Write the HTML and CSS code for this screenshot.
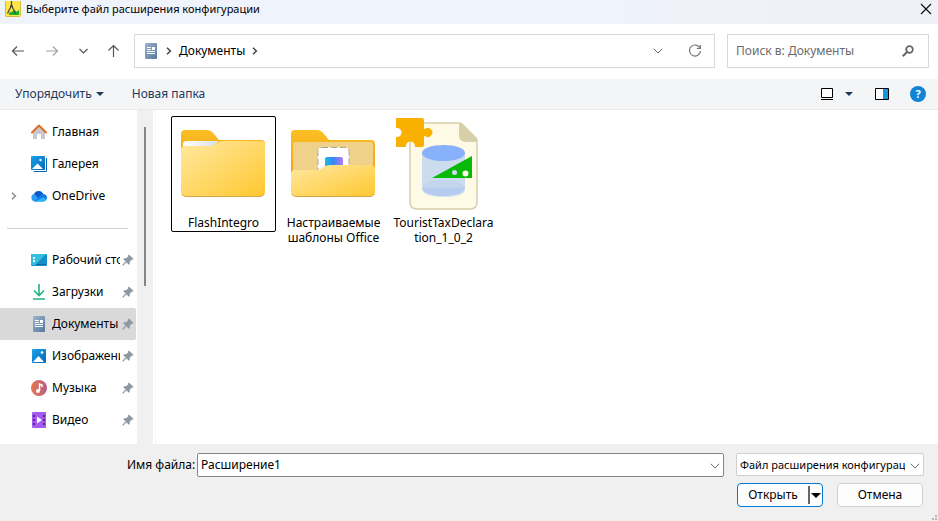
FILE: index.html
```html
<!DOCTYPE html>
<html lang="ru">
<head>
<meta charset="utf-8">
<title>Выберите файл расширения конфигурации</title>
<link rel="stylesheet" href="styles.css">
</head>
<body>
<svg class="defs" aria-hidden="true">
  <defs>
    <linearGradient id="g-blue" x1="0" y1="0" x2="1" y2="1"><stop offset="0" stop-color="#1aa3ea"/><stop offset="1" stop-color="#0566b8"/></linearGradient>
    <linearGradient id="g-doc" x1="0" y1="0" x2="1" y2="1"><stop offset="0" stop-color="#9db4cc"/><stop offset="1" stop-color="#56789e"/></linearGradient>
    <linearGradient id="g-folder" x1="0" y1="0" x2="1" y2="1"><stop offset="0" stop-color="#ffe8a0"/><stop offset="1" stop-color="#ffc830"/></linearGradient>
    <linearGradient id="g-back" x1="0" y1="0" x2="0" y2="1"><stop offset="0" stop-color="#fbbf24"/><stop offset="1" stop-color="#efa30e"/></linearGradient>
    <symbol id="pin" viewBox="0 0 12 12"><path fill="#8d98a2" d="M7 .5 11.500 5l-1 .8-.8-.1-2 2 .1 2-1 1-2.400-2.400L1.400 11.400.6 11.500.5 10.600 3.600 7.500 1.200 5.200l1-1 2 .1 2-2-.1-.9z"/></symbol>
    <symbol id="chevron-down" viewBox="0 0 10 6"><path fill="none" stroke="currentColor" d="M.8.8 5 5 9.200.8"/></symbol>
    <symbol id="chevron-right" viewBox="0 0 6 8"><path fill="none" stroke="currentColor" stroke-width="1.500" d="m1 .8 3.400 3.200L1 7.200"/></symbol>
    <symbol id="triangle" viewBox="0 0 8 4"><path fill="currentColor" d="M0 0h8L4 4z"/></symbol>
    <symbol id="document" viewBox="0 0 16 16"><rect x="2" width="12" height="16" rx="1" fill="url(#g-doc)"/><path stroke="#fff" d="M4 4.500h4M4 6.500h4M4 8.500h8M4 10.500h8"/><path fill="#fff" d="M9 4h3v3H9z"/></symbol>
  </defs>
</svg>

<header class="titlebar">
  <svg class="app-icon" viewBox="0 0 16 16"><rect x=".5" y="-2" width="15" height="17.500" rx="1" fill="#ffe54a" stroke="#d9b83a"/><path fill="#0db32a" d="M4 14v-2l6-3 1 2 3-2v5z"/><path fill="none" stroke="#4a4a2c" stroke-width="1.300" d="m2.500 12.500 4-8 4 8M6.500 0v4M5 5h3"/></svg>
  <h1>Выберите файл расширения конфигурации</h1>
  <button class="close" aria-label="Закрыть"><svg viewBox="0 0 12 12"><path stroke="#111" stroke-width="1.200" d="m1 1 10 10M11 1 1 11"/></svg></button>
</header>

<nav class="navigation" aria-label="Навигация">
  <div class="history">
    <button aria-label="Назад"><svg viewBox="0 0 16 16"><path d="M14 8H2.500M7 3.500 2.500 8 7 12.500"/></svg></button>
    <button class="disabled" aria-label="Вперёд"><svg viewBox="0 0 16 16"><path d="M2 8h11.500M9 3.500l4.500 4.500L9 12.500"/></svg></button>
    <button class="recent" aria-label="Последние расположения"><svg viewBox="0 0 16 16"><path d="m4.500 6 4 4 4-4"/></svg></button>
    <button aria-label="Вверх"><svg viewBox="0 0 16 16"><path d="M7.500 14V2.500M2.500 7.500l5-5 5 5"/></svg></button>
  </div>
  <div class="address">
    <svg class="icon16"><use href="#document"/></svg>
    <svg class="crumb-arrow"><use href="#chevron-right"/></svg>
    <a href="#documents">Документы</a>
    <svg class="crumb-arrow"><use href="#chevron-right"/></svg>
    <button class="expand" aria-label="Показать адреса"><svg class="chevron"><use href="#chevron-down"/></svg></button>
    <button aria-label="Обновить"><svg class="refresh" viewBox="0 0 14 14"><path fill="none" stroke="#777" stroke-width="1.200" d="M12 4.200A5.500 5.500 0 1 0 12.500 7M12.300 1v3.500H8.800"/></svg></button>
  </div>
  <div class="search">
    <input type="text" aria-label="Поиск" placeholder="Поиск в: Документы">
    <svg viewBox="0 0 12 12"><circle cx="7.500" cy="4.500" r="3.300" fill="none" stroke="#666" stroke-width="1.800"/><path stroke="#666" stroke-width="2" d="M5.200 6.800.8 11.200"/></svg>
  </div>
</nav>

<div class="toolbar">
  <button>Упорядочить <svg class="triangle"><use href="#triangle"/></svg></button>
  <button>Новая папка</button>
  <div class="view-tools">
    <button aria-label="Вид"><svg class="view" viewBox="0 0 12 12"><path fill="#fff" stroke="#000" d="M.5.5h11v9H.5zM0 11.500h12"/></svg></button>
    <button class="view-menu" aria-label="Изменить вид"><svg class="triangle"><use href="#triangle"/></svg></button>
    <button class="preview" aria-label="Область просмотра"><svg viewBox="0 0 14 12"><path fill="#fff" d="M0 0h14v12H0z"/><path fill="#1594e0" d="M8 1h5v10H8z"/><path fill="none" stroke="#000" d="M.5.5h13v11H.5z"/></svg></button>
    <button class="help" aria-label="Справка">?</button>
  </div>
</div>

<main>
  <aside>
    <ul>
      <li><a href="#home"><span class="tree"></span><svg class="icon16" viewBox="0 0 16 16"><path fill="#c9c9cb" d="M2 7.500 8 2l6 5.500V15h-4v-5H6v5H2z"/><path fill="none" stroke="#df6c25" stroke-width="2" stroke-linecap="round" stroke-linejoin="round" d="m1 8.500 7-7 7 7"/></svg><span class="name">Главная</span></a></li>
      <li><a href="#gallery"><span class="tree"></span><svg class="icon16" viewBox="0 0 16 16"><path fill="none" stroke="#0868b5" d="M2.500 15.500h13V2"/><rect width="14" height="14" rx="1" fill="url(#g-blue)"/><path fill="#fff" d="m1 13 5.500-5.500L12 13z"/><circle cx="9.500" cy="4" r="1.200" fill="#fff"/></svg><span class="name">Галерея</span></a></li>
      <li><a href="#onedrive"><span class="tree"><svg class="tree-arrow"><use href="#chevron-right"/></svg></span><svg class="icon16" viewBox="0 0 16 16"><path fill="#2b9df2" d="M4 13.500A4 4 0 0 1 3.200 5.700 5 5 0 0 1 12 5.500L8 11z"/><path fill="#0a57cf" d="M3.200 5.600A5 5 0 0 1 12.200 6L7.500 10.500z"/><path fill="#0f7bea" d="M3.500 13.400 9.500 7A3.800 3.800 0 1 1 12.200 13.500H4z"/><path fill="#2bb5fa" d="M4 13.500 12 9.500l3.600 1.800a3.800 3.800 0 0 1-3.400 2.200z"/></svg><span class="name">OneDrive</span></a></li>
    </ul>
    <hr>
    <ul>
      <li><a href="#desktop"><span class="tree"></span><svg class="icon16" viewBox="0 0 16 16"><rect y="2" width="16" height="12" rx="1" fill="#168fc8"/><path fill="#35bfe0" d="M1 2h14L4 13H0V3z"/><path fill="#fff" d="M2 5h2v2H2zM2 8h2v2H2z"/><path stroke="#126ba4" d="M5 12.500h10"/></svg><span class="name">Рабочий стол</span><svg class="pin"><use href="#pin"/></svg></a></li>
      <li><a href="#downloads"><span class="tree"></span><svg class="icon16" viewBox="0 0 16 16"><path fill="none" stroke="#20b485" stroke-width="1.600" d="M8 0v11M3 6.500l5 5 5-5M2 15h12"/></svg><span class="name">Загрузки</span><svg class="pin"><use href="#pin"/></svg></a></li>
      <li><a class="selected" href="#documents"><span class="tree"></span><svg class="icon16"><use href="#document"/></svg><span class="name">Документы</span><svg class="pin"><use href="#pin"/></svg></a></li>
      <li><a href="#pictures"><span class="tree"></span><svg class="icon16" viewBox="0 0 16 16"><rect x="1" y="1" width="14" height="14" rx="1" fill="url(#g-blue)"/><path fill="#fff" d="m2 14 5.500-6L13 14z"/><circle cx="11" cy="4.500" r="1.300" fill="#fff"/></svg><span class="name">Изображения</span><svg class="pin"><use href="#pin"/></svg></a></li>
      <li><a href="#music"><span class="tree"></span><svg class="icon16" viewBox="0 0 16 16"><linearGradient id="g-music"><stop stop-color="#e97752"/><stop offset="1" stop-color="#b75b86"/></linearGradient><circle cx="8" cy="8" r="8" fill="url(#g-music)"/><circle cx="7" cy="11" r="2" fill="#fff"/><path fill="none" stroke="#fff" stroke-width="1.500" d="M8.500 11V4l2.500 1v2"/></svg><span class="name">Музыка</span><svg class="pin"><use href="#pin"/></svg></a></li>
      <li><a href="#videos"><span class="tree"></span><svg class="icon16" viewBox="0 0 16 16"><rect x="1" width="14" height="16" rx="1" fill="#a45cf0"/><path fill="#582491" d="M2 3h2v2H2zM2 7h2v2H2zM2 11h2v2H2zM12 3h2v2h-2zM12 7h2v2h-2zM12 11h2v2h-2z"/><path fill="#fff" d="m6 4.500 5 3.500-5 3.500z"/></svg><span class="name">Видео</span><svg class="pin"><use href="#pin"/></svg></a></li>
    </ul>
  </aside>
  <div class="scrollbar"><div class="thumb"></div></div>
  <section class="files" aria-label="Файлы">
    <button class="file focused">
      <svg viewBox="1 1 96 96"><path fill="url(#g-back)" d="M6 18q0-4 4-4h22q4 0 7 4l5 6h42q4 0 4 4v20H6z"/><linearGradient id="g-paper"><stop stop-color="#fff"/><stop offset="1" stop-color="#d9dde3"/></linearGradient><path fill="url(#g-paper)" d="M8 28q0-3 3-3h33l-6 5H8z"/><path fill="url(#g-folder)" d="M6 34q0-4 4-4h26q3 0 6-3 3-2 6-2h38q4 0 4 4v47q0 4-4 4H10q-4 0-4-4z"/><path fill="none" stroke="#d5a545" d="M7 78q1 2.500 4 2.500h74q3 0 4-2.500"/></svg>
      <span>FlashIntegro</span>
    </button>
    <button class="file">
      <svg viewBox="1 1 96 96"><path fill="url(#g-back)" d="M6 18q0-4 4-4h22q4 0 7 4l5 6h42q4 0 4 4v35H6z"/><path fill="#f0d189" d="M8 28q0-2 2-2h76q2 0 2 2v36H8z"/><rect x="33" y="31.500" width="31" height="32" rx="4" fill="#fff" stroke="#a9a49a" stroke-dasharray="6 3"/><linearGradient id="g-office"><stop stop-color="#20b8ec"/><stop offset=".45" stop-color="#3388f7"/><stop offset="1" stop-color="#b77af5"/></linearGradient><path fill="url(#g-office)" d="M40 43q0-2 2-2h14q2 0 2 2v8H40z"/><path fill="url(#g-folder)" d="M6 58q0-4 4-4h22q3 0 5-2 4-3 8-3h41q4 0 4 4v23q0 4-4 4H10q-4 0-4-4z"/><path fill="none" stroke="#d5a545" d="M7 78q1 2.500 4 2.500h74q3 0 4-2.500"/></svg>
      <span>Настраиваемые шаблоны Office</span>
    </button>
    <button class="file">
      <svg viewBox="5 0 96 96"><path fill="#fffae5" stroke="#d6cfaa" stroke-width="1.500" d="M20 6h49l17 17v62q0 7-7 7H26q-7 0-7-7V13z"/><path fill="#d6cfaa" d="M68 6h3l15 15v4H75q-7 0-7-7z"/><path fill="#d7e3ed" d="M31 36h43v36q0 8-21 8t-22-8z"/><ellipse cx="52.500" cy="71" rx="21.500" ry="8" fill="#b5ccef"/><path fill="#c9d9ed" opacity=".7" d="M31 36h43v35H31z"/><ellipse cx="52.500" cy="36" rx="21.500" ry="8" fill="#87b1fb"/><path fill="#08b908" d="m41 61 40-22v22z"/><circle cx="63.500" cy="55.500" r="2.500" fill="#c9ddec"/><circle cx="74.500" cy="56.500" r="3" fill="#fff8e8"/><path fill="#fab000" d="M6 1h25q2 0 2 2v9h1a4.500 4.500 0 1 1 0 7h-1v9q0 2-2 2h-7v-1a4.500 4.500 0 1 0-9 0v1H6q-2 0-2-2v-8h2a4.500 4.500 0 1 0 0-9H4V3q0-2 2-2z"/></svg>
      <span>TouristTaxDeclara<wbr>tion_1_0_2</span>
    </button>
  </section>
</main>

<footer>
  <label for="filename">Имя файла:</label>
  <div class="field name-field"><input id="filename" type="text" value="Расширение1"><svg class="chevron"><use href="#chevron-down"/></svg></div>
  <div class="choices">
    <div class="field type-field"><select aria-label="Тип файлов"><option>Файл расширения конфигурации</option></select><svg class="chevron"><use href="#chevron-down"/></svg></div>
    <div class="actions">
      <div class="split"><button>Открыть</button><button class="split-arrow" aria-label="Варианты открытия"><svg class="triangle"><use href="#triangle"/></svg></button></div>
      <button class="cancel">Отмена</button>
    </div>
  </div>
  <svg class="grip" viewBox="0 0 6 6"><path fill="#b8b8b8" d="M3 0h2v2H3zM0 3h2v2H0zM3 3h2v2H3z"/></svg>
</footer>
</body>
</html>
```
FILE: styles.css
```css
* { box-sizing: border-box; }

body {
  margin: 0;
  height: 100vh;
  display: flex;
  flex-direction: column;
  overflow: hidden;
  background: #fff;
  color: #000;
  font: 12px/16px "Noto Sans", "Open Sans", sans-serif;
}

button, input, select { font: inherit; color: inherit; }
button { border: 0; padding: 0; background: none; }
a { color: inherit; text-decoration: none; }
svg { display: block; flex: none; }
.defs { position: absolute; width: 0; height: 0; }
.icon16 { width: 16px; height: 16px; }
.chevron { width: 10px; height: 6px; color: #666; }
.triangle { width: 8px; height: 4px; }

.titlebar {
  display: flex;
  flex: none;
  height: 24px;
  padding: 0 6px 6px 5px;
  gap: 5px;
  align-items: center;
  background: linear-gradient(90deg, #eff3fb 65%, #eff1f6 85%);
}
.titlebar h1 { margin: 0; font-size: 11px; font-weight: 400; }
.app-icon { width: 16px; height: 16px; }
.close { margin-left: auto; }
.close svg { width: 12px; height: 12px; }

.navigation {
  display: flex;
  flex: none;
  height: 55px;
  padding: 10px 9px 11px 10px;
  gap: 12px;
}
.history { display: flex; width: 112px; gap: 18px; align-items: center; }
.history svg { width: 16px; height: 16px; fill: none; stroke: #555; stroke-width: 1.2; }
.history .disabled svg { stroke: #a5a5a5; }
.history .recent { margin: 0 -3px; }
.address {
  display: flex;
  flex: 1;
  min-width: 0;
  padding: 0 12px 0 8px;
  gap: 7px;
  align-items: center;
  border: 1px solid #d9d9d9;
}
.crumb-arrow { width: 6px; height: 8px; color: #444; }
.address .expand { margin: 0 18px 0 auto; }
.refresh { width: 14px; height: 14px; }
.search {
  display: flex;
  width: 202px;
  padding: 0 14px 0 8px;
  align-items: center;
  border: 1px solid #d9d9d9;
}
.search input { flex: 1; min-width: 0; border: 0; padding: 0; outline: 0; background: none; }
.search input::placeholder { color: #6b6b6b; opacity: 1; }
.search svg { width: 12px; height: 12px; }

.toolbar {
  display: flex;
  flex: none;
  height: 31px;
  padding: 0 12px 0 15px;
  gap: 28px;
  align-items: center;
  border-bottom: 1px solid #e8e9ea;
  background: #f4f5f7;
  color: #1e395b;
}
.toolbar button { display: flex; gap: 4px; align-items: center; }
.view-tools { display: flex; margin-left: auto; align-items: center; }
.view { width: 12px; height: 12px; }
.view-menu { margin: 0 22px 0 12px; }
.preview svg { width: 14px; height: 12px; }
.toolbar .help {
  width: 16px;
  height: 16px;
  margin-left: 21px;
  justify-content: center;
  border-radius: 50%;
  background: #1185d5;
  color: #fff;
  font-size: 11px;
  font-weight: 700;
}

main { display: flex; flex: 1; min-height: 0; }
aside { width: 137px; padding: 6px 1px 0 0; overflow: hidden; }
aside ul { margin: 0; padding: 0; list-style: none; }
aside hr { margin: 16px 8px 15px 7px; border: 0; border-top: 1px solid #d0d0d0; }
aside a { display: flex; height: 32px; align-items: center; padding-right: 2px; }
.name { flex: 1; min-width: 0; margin: 0 2px 0 5px; overflow: hidden; white-space: nowrap; }
aside .selected { border-radius: 0 2px 2px 0; background: #d9d9d9; }
.tree { width: 31px; padding-left: 11px; flex: none; }
.tree-arrow { width: 6px; height: 8px; color: #8a8a8a; }
.pin { width: 12px; height: 12px; }
.scrollbar { width: 16px; padding: 17px 7px 0; background: #f0f0f0; }
.thumb { width: 2px; height: 159px; background: #858585; }

.files {
  display: flex;
  flex: 1;
  flex-wrap: wrap;
  margin-left: 2px;
  padding: 6px 15px;
  gap: 5px;
  align-content: flex-start;
  align-items: flex-start;
  border-left: 1px solid #f5f5f5;
}
.file {
  display: flex;
  flex-direction: column;
  width: 105px;
  min-height: 116px;
  padding: 0 5px;
  gap: 2px;
  align-items: center;
  border: 1px solid transparent;
  line-height: 15px;
}
.file.focused { border-color: #000; border-radius: 2px; }
.file svg { width: 96px; height: 96px; }

footer {
  position: relative;
  display: flex;
  flex: none;
  height: 77px;
  padding: 9px 14px 0 127px;
  align-items: flex-start;
  background: #f0f0f0;
}
footer label { flex: none; width: 70px; line-height: 24px; }
.field { position: relative; display: flex; border: 1px solid #858585; border-radius: 2px; background: #fff; }
.field input, .field select { width: 100%; min-width: 0; border: 0; padding: 0 18px 0 3px; outline: 0; background: transparent; }
.field select { appearance: none; font-size: 11px; }
.field .chevron { position: absolute; top: 9px; right: 3px; }
.name-field { flex: 1; height: 24px; }
.choices { width: 188px; margin-left: 12px; }
.type-field { height: 23px; border-color: #cfcfcf; }
.actions { display: flex; margin: 7px 1px 0; justify-content: space-between; }
.split, .cancel { display: flex; width: 86px; height: 24px; border: 1px solid #0078d4; border-radius: 4px; background: #fdfdfd; align-items: center; }
.split > button:first-child { flex: 1; }
.split .split-arrow { height: 18px; width: 14px; padding-left: 1px; border-left: 2px solid #666; }
.split-arrow .triangle { width: 10px; height: 5px; }
.cancel { justify-content: center; border-color: #d0d0d0; }
.grip { position: absolute; right: 0; bottom: 0; width: 6px; height: 6px; }
```
